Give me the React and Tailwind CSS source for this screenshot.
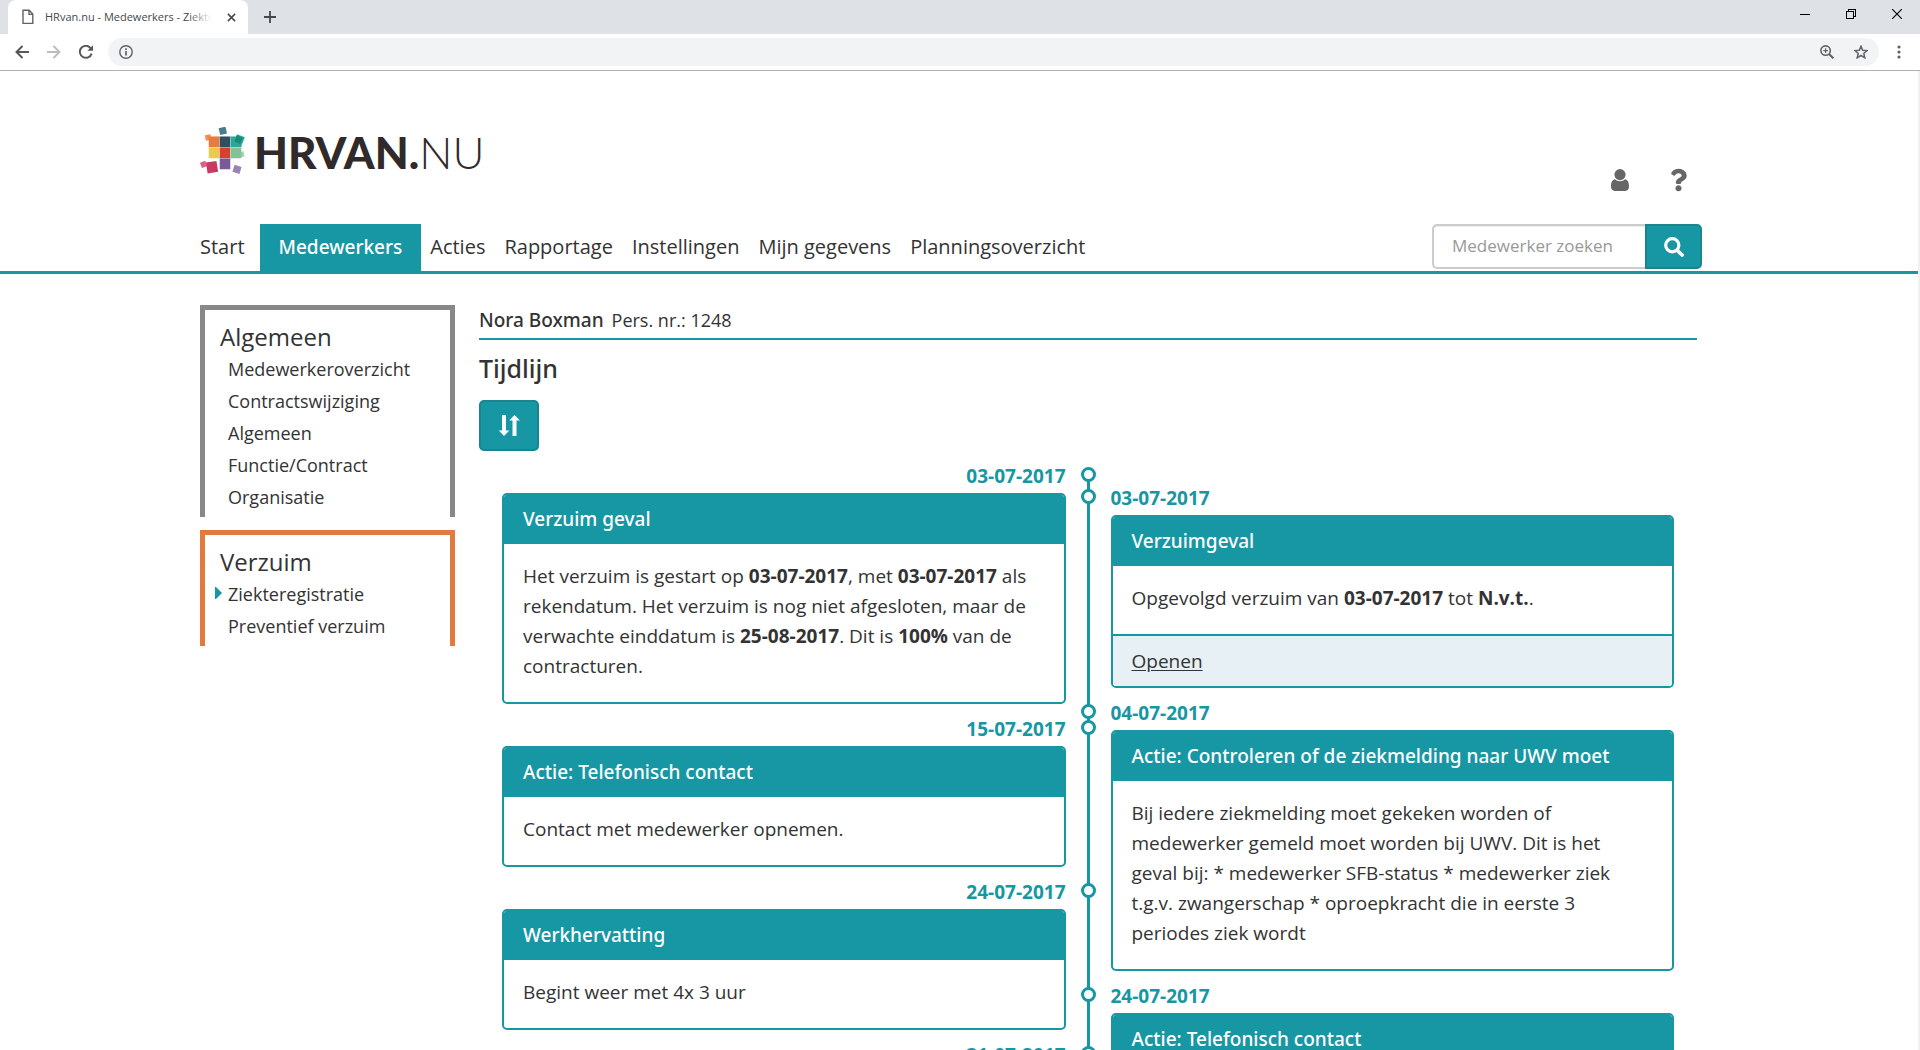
import React from "react";
import { FaQuestion } from "react-icons/fa";

function TabFileIcon() {
  return (
    <svg viewBox="0 0 12 16" className="h-4 w-3 shrink-0" fill="none" stroke="#5f6368" strokeWidth="1.4">
      <path d="M1 1.2h6.2L10.8 5v9.4H1zM7 1.4v4h3.8" />
    </svg>
  );
}

function BrowserChrome() {
  return (
    <div className="shrink-0">
      <div className="flex h-[34px] bg-[#dee1e6] pl-2">
        <div className="flex w-60 items-center gap-[11px] rounded-t-lg bg-white pl-[14px] pr-[9px]">
          <TabFileIcon />
          <span className="relative flex-1 overflow-hidden whitespace-nowrap text-[11px] leading-4 text-[#45494d]">
            HRvan.nu - Medewerkers - Ziekteregistratie
            <span className="absolute inset-y-0 right-0 w-6 bg-linear-to-r from-transparent to-white" />
          </span>
          <button type="button" aria-label="Tab sluiten" className="flex size-4 items-center justify-center">
            <svg viewBox="0 0 10 10" className="size-[9px]" stroke="#45494d" strokeWidth="1.7">
              <path d="M1 1l8 8M9 1l-8 8" />
            </svg>
          </button>
        </div>
        <button type="button" aria-label="Nieuw tabblad" className="ml-4 flex w-3 items-center justify-center">
          <svg viewBox="0 0 12 12" className="size-3" stroke="#45494d" strokeWidth="1.8">
            <path d="M6 0v12M0 6h12" />
          </svg>
        </button>
        <div className="ml-auto flex h-7 items-center gap-9 pr-[18px]">
          <button type="button" aria-label="Minimaliseren">
            <svg viewBox="0 0 10 10" className="size-[10px]" stroke="#000" shapeRendering="crispEdges">
              <path d="M0 5.5h10" />
            </svg>
          </button>
          <button type="button" aria-label="Verkleinen">
            <svg viewBox="0 0 10 10" className="size-[10px]" stroke="#000" fill="none" shapeRendering="crispEdges">
              <path d="M.5 2.5h7v7h-7zM2.5 2.5v-2h7v7h-2" />
            </svg>
          </button>
          <button type="button" aria-label="Sluiten">
            <svg viewBox="0 0 10 10" className="size-[10px]" stroke="#000" strokeWidth="1.1">
              <path d="M0 0l10 10M10 0L0 10" />
            </svg>
          </button>
        </div>
      </div>
      <div className="flex h-9 items-center bg-white pl-[15px] pr-[19px]">
        <button type="button" aria-label="Terug">
          <svg viewBox="0 0 14 14" className="size-[14px]" fill="none" stroke="#55595e" strokeWidth="2">
            <path d="M14 7H1.5M7.5 1l-6 6 6 6" />
          </svg>
        </button>
        <button type="button" aria-label="Vooruit" className="ml-[18px]">
          <svg viewBox="0 0 14 14" className="size-[14px]" fill="none" stroke="#bbbdbf" strokeWidth="2">
            <path d="M0 7h12.5M6.5 1l6 6-6 6" />
          </svg>
        </button>
        <button type="button" aria-label="Vernieuwen" className="ml-[18px]">
          <svg viewBox="0 0 14 14" className="size-[14px]" fill="none" stroke="#55595e" strokeWidth="2">
            <path d="M12.6 8.6A6 6 0 1 1 11.3 2.8L12.6 4.2" />
            <path d="M14 .2v5.600H8.4z" fill="#55595e" stroke="none" />
          </svg>
        </button>
        <div className="ml-[15px] flex h-7 flex-1 items-center rounded-full bg-[#f1f3f4] pl-[11px] pr-[11px]">
          <svg viewBox="0 0 14 14" className="size-[14px]" fill="none" stroke="#5f6368" strokeWidth="1.4">
            <circle cx="7" cy="7" r="6.2" />
            <path d="M7 6v4.4M7 3.3v1.6" strokeWidth="1.7" />
          </svg>
          <input aria-label="Adres" className="ml-2 min-w-0 flex-1 bg-transparent text-sm outline-none" />
          <button type="button" aria-label="Zoom">
            <svg viewBox="0 0 14 14" className="size-[14px]" fill="none" stroke="#5f6368" strokeWidth="1.6">
              <circle cx="5.6" cy="5.6" r="4.7" />
              <path d="M9 9l4.4 4.4" strokeWidth="2" />
              <path d="M5.6 3.3v4.6M3.3 5.6h4.6" strokeWidth="1.2" />
            </svg>
          </button>
          <button type="button" aria-label="Bladwijzer" className="ml-5">
            <svg viewBox="0 0 14 14" className="size-[14px]" fill="none" stroke="#5f6368" strokeWidth="1.5">
              <path d="M7 1.200l1.700 4 4.400.4-3.300 2.900 1 4.300L7 10.500l-3.800 2.300 1-4.300L.9 5.600l4.400-.4z" />
            </svg>
          </button>
        </div>
        <button type="button" aria-label="Menu" className="ml-[18px]">
          <svg viewBox="0 0 4 14" className="h-[14px] w-1" fill="#5f6368">
            <circle cx="2" cy="2" r="1.6" />
            <circle cx="2" cy="7" r="1.6" />
            <circle cx="2" cy="12" r="1.6" />
          </svg>
        </button>
      </div>
      <div className="h-px bg-[#b0b0b0]" />
    </div>
  );
}

function Logo() {
  return (
    <a href="#start" className="flex items-center gap-2 font-['Lato',sans-serif] text-[#312a2b]">
      <svg viewBox="30 54 138 141" className="h-[47px] w-[46px]" aria-hidden="true">
        <g stroke="#fff" strokeOpacity=".6" strokeWidth="1">
          <rect x="56" y="82" width="33" height="33" fill="#e67d40" />
          <rect x="89" y="82" width="32" height="33" fill="#324f61" />
          <rect x="121" y="82" width="34" height="33" fill="#2ba79a" />
          <rect x="56" y="115" width="33" height="33" fill="#efc94c" />
          <rect x="89" y="115" width="32" height="33" fill="#d64133" />
          <rect x="121" y="115" width="33" height="33" fill="#82c396" />
          <rect x="89" y="148" width="32" height="33" fill="#775a97" />
        </g>
        <rect x="88" y="55" width="21" height="21" fill="#4a7a8e" transform="rotate(-13 99 66)" />
        <rect x="46" y="77" width="17" height="17" fill="#ef7a3a" fillOpacity=".85" transform="rotate(-10 54 86)" />
        <rect x="136" y="79" width="25" height="25" fill="#2ba79a" transform="rotate(22 148 91)" />
        <rect x="136" y="82" width="19" height="20" fill="#1c8a75" transform="rotate(22 146 92)" />
        <rect x="146" y="128" width="16" height="16" fill="#82c396" fillOpacity=".75" transform="rotate(-10 154 136)" />
        <rect x="50" y="158" width="32" height="33" fill="#c93a60" transform="rotate(-9 66 174)" />
        <rect x="32" y="158" width="17" height="17" fill="#d9507a" fillOpacity=".9" transform="rotate(-20 40 166)" />
        <rect x="130" y="170" width="22" height="22" fill="#9a82b5" transform="rotate(17 141 181)" />
      </svg>
      <span className="pt-1 text-[44px] leading-[46px]">
        <span className="font-black">HRVAN.</span>
        <span className="font-light">NU</span>
      </span>
    </a>
  );
}

function UserIcon() {
  return (
    <svg viewBox="0 0 18 22" className="h-[22px] w-[18px]" fill="currentColor">
      <circle cx="9" cy="5.6" r="5.6" />
      <path d="M4 10.2C1.2 10.6 0 13.5 0 17.6 0 20.2 1.4 22 3.8 22h10.4c2.4 0 3.8-1.8 3.8-4.4 0-4.1-1.2-7-4-7.4-1.2 1.2-2.8 2-5 2s-3.8-.8-5-2z" />
    </svg>
  );
}

const navItems = ["Acties", "Rapportage", "Instellingen", "Mijn gegevens", "Planningsoverzicht"];

function Header() {
  return (
    <header className="border-b-[3px] border-[#1796a3] pr-4">
      <div className="mx-auto max-w-[1502px]">
        <div className="flex h-[153px] items-end justify-between">
          <div className="pb-[49px]">
            <Logo />
          </div>
          <div className="flex items-center gap-[41px] pb-8 pr-[15px] text-[#666]">
            <button type="button" aria-label="Profiel">
              <UserIcon />
            </button>
            <button type="button" aria-label="Help">
              <FaQuestion className="h-6 w-[17px]" />
            </button>
          </div>
        </div>
        <div className="flex h-[47px] items-start justify-between">
          <nav className="flex whitespace-nowrap text-xl leading-[46px]">
            <a href="#start" className="pr-[15px]">Start</a>
            <a href="#medewerkers" aria-current="page" className="mr-[9px] h-[47px] bg-[#1796a3] px-[19px] font-['Noto_Sans',sans-serif] text-[19px] font-medium text-white">
              Medewerkers
            </a>
            <span className="flex gap-[19px]">
              {navItems.map((item) => (
                <a key={item} href="#nav">{item}</a>
              ))}
            </span>
          </nav>
          <form className="flex" onSubmit={(e) => e.preventDefault()}>
            <input
              type="text"
              aria-label="Medewerker zoeken"
              placeholder="Medewerker zoeken"
              className="h-[45px] w-[213px] rounded-l-[5px] border-2 border-r-0 border-[#ccc] pb-0.5 pl-[18px] pr-2 text-[17px] shadow-[inset_0_1px_1px_rgba(0,0,0,0.08)] outline-none placeholder:text-[#999]"
            />
            <button type="submit" aria-label="Zoeken" className="flex h-[45px] w-[57px] items-center justify-center rounded-r-[5px] border-2 border-[#18858f] bg-[#1796a3] text-white">
              <svg viewBox="0 0 20 20" className="size-5" fill="none" stroke="currentColor">
                <circle cx="8.3" cy="8.3" r="6.6" strokeWidth="3.2" />
                <path d="M13.2 13.2l4.9 4.9" strokeWidth="3.6" strokeLinecap="round" />
              </svg>
            </button>
          </form>
        </div>
      </div>
    </header>
  );
}

function SideMenu({ title, items, active, frame }) {
  return (
    <section className={"border-x-[5px] border-t-[5px] pb-1 pl-[15px] pt-[10px] " + frame}>
      <h2 className="text-2xl leading-[33px]">{title}</h2>
      <ul className="pl-2 text-[18px] leading-8">
        {items.map((item) => (
          <li key={item} className="relative">
            {item === active && (
              <svg viewBox="0 0 7 12" className="absolute -left-[13px] top-[9px] h-3 w-[7px]" fill="#1796a3" aria-hidden="true">
                <path d="M0 0h1l6 6-6 6H0z" />
              </svg>
            )}
            <a href="#menu">{item}</a>
          </li>
        ))}
      </ul>
    </section>
  );
}

function Entry({ date, title, side, footer, children }) {
  const left = side === "left";
  return (
    <article className="relative">
      <div className={"pb-0.5 pt-[10px] text-[19px] font-bold leading-[30px] text-[#1796a3] " + (left ? "text-right" : "")}>
        {date}
      </div>
      <span className={"absolute top-4 size-[15px] rounded-full border-[3px] border-[#1796a3] bg-white " + (left ? "-right-[30px]" : "-left-[30px]")} />
      {title && (
        <div className="overflow-hidden rounded-[5px] border-2 border-[#1796a3]">
          <h3 className="bg-[#1796a3] px-[19px] font-['Noto_Sans',sans-serif] text-[19px] font-medium leading-[49px] text-white">{title}</h3>
          <p className="pb-[21px] pl-[19px] pr-6 pt-[17px] text-[19px] leading-[30px]">{children}</p>
          {footer && (
            <div className="border-t-2 border-[#1796a3] bg-[#e7f0f4] px-[19px] text-[19px] leading-[50px]">
              <a href="#openen" className="underline underline-offset-2">{footer}</a>
            </div>
          )}
        </div>
      )}
    </article>
  );
}

function Timeline() {
  return (
    <div className="grid grid-cols-[1fr_3px_1fr] gap-x-[21px] px-[23px]">
      <div>
        <Entry side="left" date="03-07-2017" title="Verzuim geval">
          Het verzuim is gestart op <b>03-07-2017</b>, met <b>03-07-2017</b> als rekendatum. Het verzuim is nog niet
          afgesloten, maar de verwachte einddatum is <b>25-08-2017</b>. Dit is <b>100%</b> van de contracturen.
        </Entry>
        <Entry side="left" date="15-07-2017" title="Actie: Telefonisch contact">
          Contact met medewerker opnemen.
        </Entry>
        <Entry side="left" date="24-07-2017" title="Werkhervatting">
          Begint weer met 4x 3 uur
        </Entry>
        <Entry side="left" date="31-07-2017" />
      </div>
      <div className="mt-6 bg-[#1796a3]" />
      <div className="pt-[22px]">
        <Entry side="right" date="03-07-2017" title="Verzuimgeval" footer="Openen">
          Opgevolgd verzuim van <b>03-07-2017</b> tot <b>N.v.t.</b>.
        </Entry>
        <Entry side="right" date="04-07-2017" title="Actie: Controleren of de ziekmelding naar UWV moet">
          Bij iedere ziekmelding moet gekeken worden of medewerker gemeld moet worden bij UWV. Dit is het geval bij: *
          medewerker SFB-status * medewerker ziek t.g.v. zwangerschap * oproepkracht die in eerste 3 periodes ziek wordt
        </Entry>
        <Entry side="right" date="24-07-2017" title="Actie: Telefonisch contact" />
      </div>
    </div>
  );
}

export default function App() {
  return (
    <div className="flex h-screen flex-col overflow-hidden bg-white font-['Open_Sans','Noto_Sans',sans-serif] text-[#333]">
      <BrowserChrome />
      <div className="flex min-h-0 flex-1 overflow-hidden">
        <div className="min-w-0 flex-1">
          <Header />
          <div className="pr-4">
            <div className="mx-auto flex max-w-[1502px] gap-6 pt-[31px]">
              <aside className="flex w-[255px] shrink-0 flex-col gap-[13px]">
                <SideMenu
                  title="Algemeen"
                  frame="border-[#888]"
                  items={["Medewerkeroverzicht", "Contractswijziging", "Algemeen", "Functie/Contract", "Organisatie"]}
                />
                <SideMenu
                  title="Verzuim"
                  frame="border-[#e07b40]"
                  active="Ziekteregistratie"
                  items={["Ziekteregistratie", "Preventief verzuim"]}
                />
              </aside>
              <main className="min-w-0 flex-1 pr-[5px]">
                <div className="flex items-baseline gap-2 border-b-2 border-[#1796a3] pb-0.5 leading-[31px]">
                  <span className="font-['Noto_Sans',sans-serif] text-[19px] font-medium">Nora Boxman</span>
                  <span className="text-[18px]">Pers. nr.: 1248</span>
                </div>
                <h1 className="mb-1 font-['Noto_Sans',sans-serif] text-[25px] font-medium leading-[56px]">Tijdlijn</h1>
                <button type="button" aria-label="Volgorde omkeren" className="flex h-[51px] w-[60px] items-center justify-center rounded-[5px] border-2 border-[#18858f] bg-[#1796a3] text-white">
                  <svg viewBox="0 0 21 21" className="size-[21px]" fill="currentColor">
                    <path d="M3 0h4v15.500h3.400L5 21l-5.200-5.500H3z" />
                    <path d="M13.500 21h4V5.500h3.400L15.500 0l-5.200 5.500h3.200z" />
                  </svg>
                </button>
                <Timeline />
              </main>
            </div>
          </div>
        </div>
        <div className="w-0.5 shrink-0 bg-[#f1f1f1]" />
      </div>
    </div>
  );
}
